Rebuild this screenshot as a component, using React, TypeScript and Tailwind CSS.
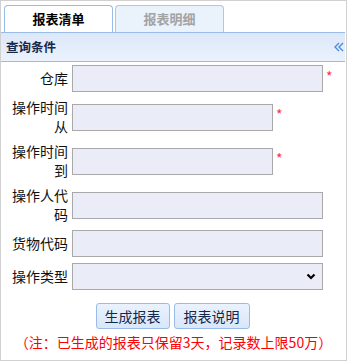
import React from 'react';

const labelCls = "w-[58px] shrink-0 text-right text-[14px] leading-[19px] text-[#111]";
const inputCls = "h-[27px] border border-[#a9a9a9] bg-[#eaedf7]";

function Star() {
  return <span className="-ml-[1px] -mt-[6px] text-[14px] leading-none text-[#ff2a55]">*</span>;
}

export default function App() {
  return (
    <div className="w-[347px] h-[361px] border border-[#d0d0d0] bg-white font-['Noto_Sans_CJK_SC',sans-serif]">
      {/* Tabs */}
      <div className="flex items-end gap-[2px] pl-[3px] pt-[4px]">
        <div className="w-[109px] h-[27px] flex items-center justify-center rounded-t-[4px] border border-b-0 border-[#99bbe8] bg-white text-[13px] font-bold text-black">
          报表清单
        </div>
        <div className="w-[109px] h-[27px] flex items-center justify-center rounded-t-[4px] border border-b-0 border-[#b8c4d4] bg-[#eaf2fc] text-[13px] font-bold text-[#a3a3a3]">
          报表明细
        </div>
      </div>

      {/* Header */}
      <div className="h-[30px] mr-[1px] flex items-center justify-between border-y border-[#99bbe8] bg-gradient-to-b from-[#dce7f8] to-[#ebf2fd] pl-[5px] pr-[1px]">
        <span className="text-[12.5px] font-bold text-[#15284b]">查询条件</span>
        <svg width="10" height="10" viewBox="0 0 10 10" fill="none" stroke="#4a8fd8" strokeWidth="1.4">
          <polyline points="5,1 1,5 5,9" />
          <polyline points="9,1 5,5 9,9" />
        </svg>
      </div>

      {/* Form */}
      <div className="flex flex-col pl-[9px]">
        <div className="h-[33px] flex items-center gap-[4px]">
          <div className={labelCls}>仓库</div>
          <div className={`${inputCls} w-[251px]`} />
          <Star />
        </div>
        <div className="h-[44px] flex items-center gap-[4px]">
          <div className={labelCls}>操作时间从</div>
          <div className={`${inputCls} w-[201px]`} />
          <Star />
        </div>
        <div className="h-[44px] flex items-center gap-[4px]">
          <div className={labelCls}>操作时间到</div>
          <div className={`${inputCls} w-[201px]`} />
          <Star />
        </div>
        <div className="h-[44px] flex items-center gap-[4px]">
          <div className={labelCls}>操作人代码</div>
          <div className={`${inputCls} w-[251px]`} />
        </div>
        <div className="h-[33px] flex items-center gap-[4px]">
          <div className={labelCls}>货物代码</div>
          <div className={`${inputCls} w-[251px]`} />
        </div>
        <div className="h-[33px] flex items-center gap-[4px]">
          <div className={labelCls}>操作类型</div>
          <div className={`${inputCls} w-[251px] flex items-center justify-end pr-[6px]`}>
            <svg width="10" height="7" viewBox="0 0 10 7" fill="none" stroke="#000" strokeWidth="2.2">
              <polyline points="1.5,1.5 5,5 8.5,1.5" />
            </svg>
          </div>
        </div>
      </div>

      {/* Buttons */}
      <div className="mt-[10px] flex justify-center gap-[4px] pr-[2px]">
        <button className="h-[26px] w-[74px] rounded-[3px] border border-[#99bbe8] bg-gradient-to-b from-[#eaf2fd] to-[#d9e7f9] text-[14px] leading-none text-[#15284b]">
          生成报表
        </button>
        <button className="h-[26px] w-[76px] rounded-[3px] border border-[#99bbe8] bg-gradient-to-b from-[#eaf2fd] to-[#d9e7f9] text-[14px] leading-none text-[#15284b]">
          报表说明
        </button>
      </div>

      <div className="mt-[3px] text-center text-[14px] leading-[20px] text-[#ff0000]">
        （注：已生成的报表只保留3天，记录数上限50万）
      </div>
    </div>
  );
}
